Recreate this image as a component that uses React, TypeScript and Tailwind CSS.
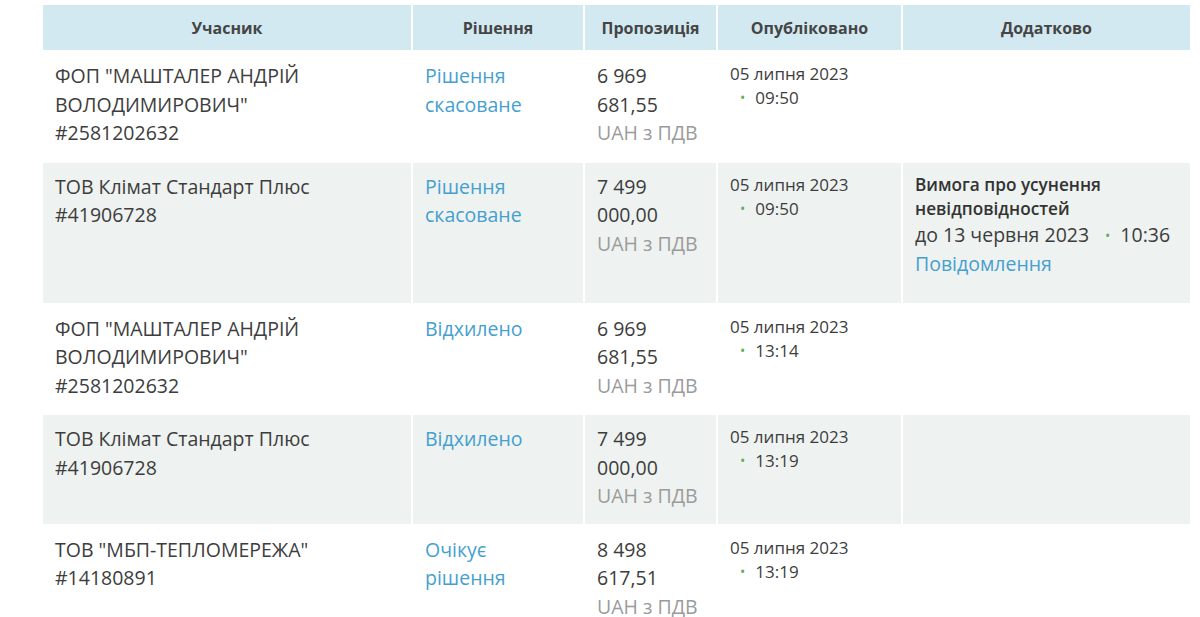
type Bid = {
  name: string[];
  code: string;
  status: string[];
  amount: string[];
  date: string;
  time: string;
  extra?: boolean;
};

const bids: Bid[] = [
  {
    name: ['ФОП "МАШТАЛЕР АНДРІЙ', 'ВОЛОДИМИРОВИЧ"'],
    code: "#2581202632",
    status: ["Рішення", "скасоване"],
    amount: ["6 969", "681,55"],
    date: "05 липня 2023",
    time: "09:50",
  },
  {
    name: ["ТОВ Клімат Стандарт Плюс"],
    code: "#41906728",
    status: ["Рішення", "скасоване"],
    amount: ["7 499", "000,00"],
    date: "05 липня 2023",
    time: "09:50",
    extra: true,
  },
  {
    name: ['ФОП "МАШТАЛЕР АНДРІЙ', 'ВОЛОДИМИРОВИЧ"'],
    code: "#2581202632",
    status: ["Відхилено"],
    amount: ["6 969", "681,55"],
    date: "05 липня 2023",
    time: "13:14",
  },
  {
    name: ["ТОВ Клімат Стандарт Плюс"],
    code: "#41906728",
    status: ["Відхилено"],
    amount: ["7 499", "000,00"],
    date: "05 липня 2023",
    time: "13:19",
  },
  {
    name: ['ТОВ "МБП-ТЕПЛОМЕРЕЖА"'],
    code: "#14180891",
    status: ["Очікує", "рішення"],
    amount: ["8 498", "617,51"],
    date: "05 липня 2023",
    time: "13:19",
  },
];

function Dot() {
  return <span className="text-[#5fae5f] text-[14px] mr-[10px] align-[1px]">•</span>;
}

export default function App() {
  const cell = "align-top px-3 pt-[10px] pb-[13px]";
  return (
    <div className="w-[1200px] h-[617px] overflow-hidden bg-white font-['Open_Sans',sans-serif] text-[#3d3d3d]">
      <table className="ml-[41px] mt-[3px] w-[1151px] table-fixed border-separate border-spacing-[2px]">
        <colgroup>
          <col className="w-[368px]" />
          <col className="w-[170px]" />
          <col className="w-[131px]" />
          <col className="w-[183px]" />
          <col />
        </colgroup>
        <thead>
          <tr className="bg-[#d3e9f1] text-[16px] font-semibold text-[#454545]">
            <th className="h-[45px] text-center">Учасник</th>
            <th className="h-[45px] text-center">Рішення</th>
            <th className="h-[45px] text-center">Пропозиція</th>
            <th className="h-[45px] text-center">Опубліковано</th>
            <th className="h-[45px] text-center">Додатково</th>
          </tr>
        </thead>
        <tbody className="text-[19.5px] leading-[28.5px]">
          {bids.map((b, i) => (
            <tr key={i} className={i % 2 === 1 ? "bg-[#eef2f0]" : "bg-white"}>
              <td className={cell}>
                {b.name.map((n) => (
                  <div key={n}>{n}</div>
                ))}
                <div>{b.code}</div>
              </td>
              <td className={cell}>
                {b.status.map((s) => (
                  <div key={s} className="text-[#459fcf]">
                    {s}
                  </div>
                ))}
              </td>
              <td className={cell}>
                {b.amount.map((a) => (
                  <div key={a}>{a}</div>
                ))}
                <div className="text-[#9b9b9b]">UAH з ПДВ</div>
              </td>
              <td className={`${cell} text-[17px] leading-[24px]`}>
                <div>{b.date}</div>
                <div className="pl-[10px]">
                  <Dot />
                  {b.time}
                </div>
              </td>
              <td className={cell}>
                {b.extra && (
                  <div className="mb-[11px]">
                    <div className="text-[17.2px] leading-[24px] font-semibold text-[#333]">
                      Вимога про усунення
                      <br />
                      невідповідностей
                    </div>
                    <div className="whitespace-nowrap">
                      до 13 червня 2023
                      <span className="ml-[16px]">
                        <Dot />
                        10:36
                      </span>
                    </div>
                    <div className="text-[#459fcf]">Повідомлення</div>
                  </div>
                )}
              </td>
            </tr>
          ))}
        </tbody>
      </table>
    </div>
  );
}
